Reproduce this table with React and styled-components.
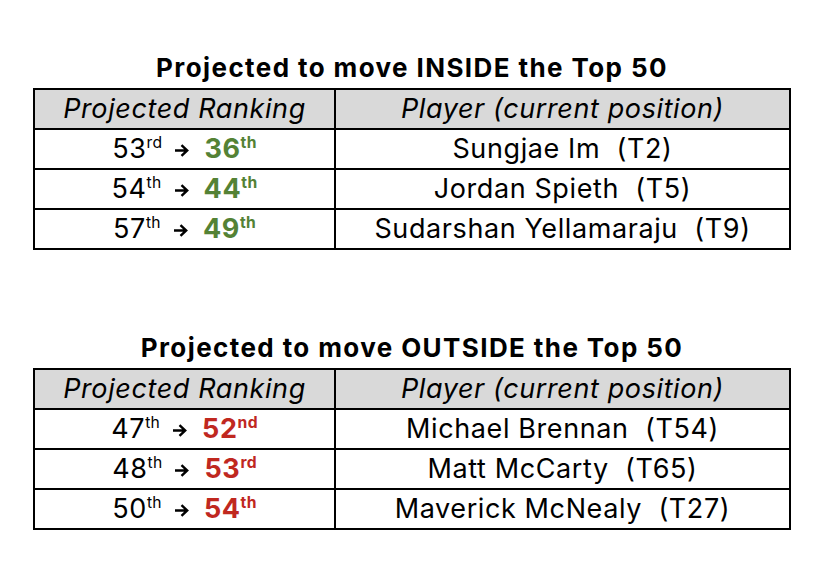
import React from "react";
import styled, { createGlobalStyle } from "styled-components";

const Global = createGlobalStyle`
  html, body { margin: 0; padding: 0; background: #ffffff; }
  body { font-family: Inter, "Liberation Sans", Arial, sans-serif; color: #000; }
`;

const Page = styled.div`
  width: 824px;
  height: 578px;
  display: flex;
  flex-direction: column;
  align-items: center;
  padding-top: 53px;
  box-sizing: border-box;
`;

const Section = styled.section`
  display: flex;
  flex-direction: column;
  align-items: center;
  margin-bottom: ${(p) => p.$gap || 0}px;
`;

const Title = styled.h2`
  margin: 0 0 5px 0;
  font-size: 26px;
  line-height: 30px;
  font-weight: 700;
  letter-spacing: 1.4px;
  white-space: nowrap;
`;

const Table = styled.table`
  border-collapse: collapse;
  width: 758px;
  table-layout: fixed;
  border: 2px solid #000;
`;

const HeadCell = styled.th`
  background: #d9d9d9;
  font-style: italic;
  font-weight: 400;
  font-size: 27px;
  line-height: 30px;
  letter-spacing: 0.6px;
  height: 38px;
  padding: 0;
  border: 2px solid #000;
  text-align: center;
  white-space: nowrap;
`;

const Cell = styled.td`
  font-size: 27px;
  line-height: 30px;
  letter-spacing: 0.6px;
  height: 38px;
  padding: 0;
  border: 2px solid #000;
  text-align: center;
  white-space: pre;
  vertical-align: middle;
`;

const Sup = styled.sup`
  font-size: 0.58em;
  vertical-align: 0;
  position: relative;
  top: -0.64em;
  line-height: 0;
  letter-spacing: 0.3px;
`;

const ArrowIcon = styled.svg`
  width: 15px;
  height: 13px;
  margin: 0 15px 0 12px;
  vertical-align: 1px;
`;

const Target = styled.span`
  font-weight: 700;
  color: ${(p) => p.$color};
`;

const GREEN = "#548235";
const RED = "#c0281f";

const inside = [
  { from: ["53", "rd"], to: ["36", "th"], name: "Sungjae Im  (T2)" },
  { from: ["54", "th"], to: ["44", "th"], name: "Jordan Spieth  (T5)" },
  { from: ["57", "th"], to: ["49", "th"], name: "Sudarshan Yellamaraju  (T9)" },
];

const outside = [
  { from: ["47", "th"], to: ["52", "nd"], name: "Michael Brennan  (T54)" },
  { from: ["48", "th"], to: ["53", "rd"], name: "Matt McCarty  (T65)" },
  { from: ["50", "th"], to: ["54", "th"], name: "Maverick McNealy  (T27)" },
];

function Arrow() {
  return (
    <ArrowIcon viewBox="0 0 15 13" aria-hidden="true">
      <path
        d="M1 6.5H13M7.5 1.2L13.2 6.5L7.5 11.8"
        fill="none"
        stroke="#000"
        strokeWidth="2.4"
      />
    </ArrowIcon>
  );
}

function RankTable({ title, rows, color, gap }) {
  return (
    <Section $gap={gap}>
      <Title>{title}</Title>
      <Table>
        <colgroup>
          <col style={{ width: "301px" }} />
          <col />
        </colgroup>
        <thead>
          <tr>
            <HeadCell>Projected Ranking</HeadCell>
            <HeadCell>Player (current position)</HeadCell>
          </tr>
        </thead>
        <tbody>
          {rows.map((r) => (
            <tr key={r.name}>
              <Cell>
                {r.from[0]}
                <Sup>{r.from[1]}</Sup>
                <Arrow />
                <Target $color={color}>
                  {r.to[0]}
                  <Sup>{r.to[1]}</Sup>
                </Target>
              </Cell>
              <Cell>{r.name}</Cell>
            </tr>
          ))}
        </tbody>
      </Table>
    </Section>
  );
}

export default function App() {
  return (
    <>
      <Global />
      <Page>
        <RankTable
          title="Projected to move INSIDE the Top 50"
          rows={inside}
          color={GREEN}
          gap={83}
        />
        <RankTable
          title="Projected to move OUTSIDE the Top 50"
          rows={outside}
          color={RED}
        />
      </Page>
    </>
  );
}
